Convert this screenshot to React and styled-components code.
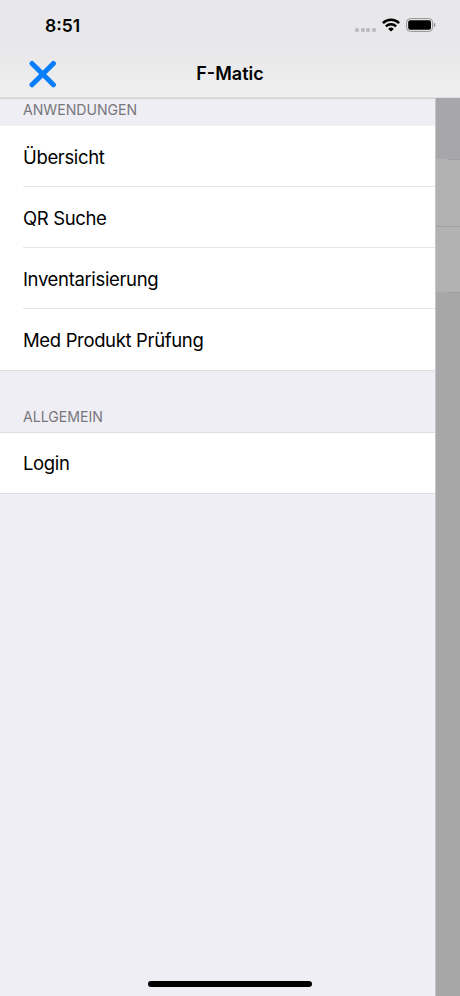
import styled, { createGlobalStyle } from "styled-components";

const App = () => {
  const sections = [
    {
      id: 0,
      title: "Anwendungen",
      first: true,
      items: ["Übersicht", "QR Suche", "Inventarisierung", "Med Produkt Prüfung"],
    },
    {
      id: 1,
      title: "Allgemein",
      items: ["Login"],
    },
  ];

  return (
    <Screen>
      <GlobalStyle />
      <Header>
        <StatusBar>
          <Time>8:51</Time>
          <StatusIcons>
            <Signal>
              <Dot />
              <Dot />
              <Dot />
              <Dot />
            </Signal>
            <WifiIcon />
            <BatteryIcon />
          </StatusIcons>
        </StatusBar>
        <NavBar>
          <CloseButton aria-label="Schließen">
            <CloseIcon />
          </CloseButton>
          <NavTitle>F-Matic</NavTitle>
        </NavBar>
      </Header>
      <Body>
        <Drawer>
          {sections.map((section) => (
            <section key={section.id}>
              <SectionTitle $first={section.first}>{section.title}</SectionTitle>
              <List $first={section.first}>
                {section.items.map((item) => (
                  <Row key={item}>
                    <RowLabel>{item}</RowLabel>
                  </Row>
                ))}
              </List>
            </section>
          ))}
        </Drawer>
        <Backdrop>
          <DimmedHeader />
          <DimmedRow $inset />
          <DimmedRow />
          <DimmedEnd />
        </Backdrop>
      </Body>
      <HomeIndicator />
    </Screen>
  );
};

const CloseIcon = () => (
  <svg width="28" height="28" viewBox="0 0 28 28" fill="none">
    <path
      d="M3 3.4 24.4 24.8M24.4 3.4 3 24.8"
      stroke="#087efb"
      strokeWidth="5"
      strokeLinecap="round"
    />
  </svg>
);

const WifiIcon = () => (
  <svg width="18" height="14" viewBox="0 0 18 14" fill="none">
    <path d="M.9 5.1a11.6 11.6 0 0 1 16.2 0" stroke="#000" strokeWidth="2.6" />
    <path d="M3.9 8.4a7.3 7.3 0 0 1 10.2 0" stroke="#000" strokeWidth="2.5" />
    <path d="M9 13.6 6.2 10.9a4 4 0 0 1 5.6 0Z" fill="#000" />
  </svg>
);

const BatteryIcon = () => (
  <svg width="30" height="14" viewBox="0 0 30 14" fill="none">
    <rect x=".6" y=".6" width="26" height="12.8" rx="3.8" stroke="#929294" />
    <rect x="2.2" y="2.2" width="22.8" height="9.6" rx="2" fill="#000" />
    <path d="M27.8 4.8c1 .4 1.6 1.2 1.6 2.2s-.6 1.8-1.6 2.2Z" fill="#929294" />
  </svg>
);

const GlobalStyle = createGlobalStyle`
  * {
    box-sizing: border-box;
  }
  body {
    margin: 0;
    font-family: Inter, "Liberation Sans", sans-serif;
    color: #000;
  }
`;

const Screen = styled.div`
  position: relative;
  display: flex;
  flex-direction: column;
  width: 460px;
  height: 996px;
  overflow: hidden;
  background: #efeef4;
`;

const Header = styled.header`
  flex: none;
  height: 98px;
  background: linear-gradient(#e8e8ea 50%, #efeff0);
  border-bottom: 1px solid #dedee0;
`;

const StatusBar = styled.div`
  display: flex;
  justify-content: space-between;
  height: 49px;
  padding: 0 24px 0 45px;
`;

const Time = styled.span`
  padding-top: 15px;
  font-size: 17.5px;
  font-weight: 600;
  line-height: 22px;
`;

const StatusIcons = styled.div`
  display: flex;
  align-items: flex-start;
  gap: 6px;
  padding-top: 18px;
`;

const Signal = styled.div`
  display: flex;
  gap: 1.6px;
  margin-top: 10px;
`;

const Dot = styled.i`
  width: 4px;
  height: 4px;
  border-radius: 1.5px;
  background: #bcbcbe;
`;

const NavBar = styled.nav`
  display: grid;
  grid-template-columns: 71px 1fr 71px;
  align-items: center;
  height: 48px;
`;

const CloseButton = styled.button`
  display: flex;
  padding: 2px 0 0 29px;
  border: 0;
  background: none;
`;

const NavTitle = styled.h1`
  margin: 2px 0 0;
  font-size: 18px;
  font-weight: 600;
  line-height: 24px;
  text-align: center;
`;

const Body = styled.div`
  display: flex;
  flex: 1;
`;

const Drawer = styled.main`
  width: 435px;
  border-top: 1px solid #d3d3d6;
`;

const SectionTitle = styled.h2`
  display: flex;
  align-items: flex-end;
  height: ${({ $first }) => ($first ? "27px" : "61px")};
  margin: 0;
  padding: 0 23px ${({ $first }) => ($first ? "7px" : "6px")};
  color: #77777b;
  font-size: 14.1px;
  font-weight: 400;
  line-height: 19px;
  text-transform: uppercase;
`;

const List = styled.ul`
  margin: 0;
  padding: 0;
  list-style: none;
  background: #fff;
  border-top: ${({ $first }) => ($first ? "0" : "1px solid #dedee1")};
  border-bottom: 1px solid #dedee1;
`;

const Row = styled.li`
  padding-left: 23px;
`;

const RowLabel = styled.div`
  height: 61px;
  font-size: 18.5px;
  letter-spacing: -0.35px;
  line-height: 62px;
  border-bottom: 1px solid #e6e6e8;

  ${Row}:last-child & {
    border-bottom: 0;
  }
  ${Row}:only-child & {
    height: 60px;
    line-height: 60px;
  }
`;

const Backdrop = styled.aside`
  flex: 1;
  background: #a7a7a8;
  border-left: 1px solid #c6c6c8;
`;

const DimmedHeader = styled.div`
  height: 61px;
  background: #a7a7aa;
`;

// the divider starts 12px in when $inset is set
const DimmedRow = styled.div`
  height: ${({ $inset }) => ($inset ? "67px" : "66px")};
  background: linear-gradient(#9f9fa0, #9f9fa0)
    ${({ $inset }) => ($inset ? "12px" : "0")} 0 / 100% 1px no-repeat #b2b2b2;
`;

const DimmedEnd = styled.div`
  height: 1px;
  margin-left: 12px;
  background: #9d9d9e;
`;

const HomeIndicator = styled.div`
  position: absolute;
  left: 148px;
  bottom: 9px;
  width: 164px;
  height: 6px;
  border-radius: 3px;
  background: #000;
`;

export default App;
